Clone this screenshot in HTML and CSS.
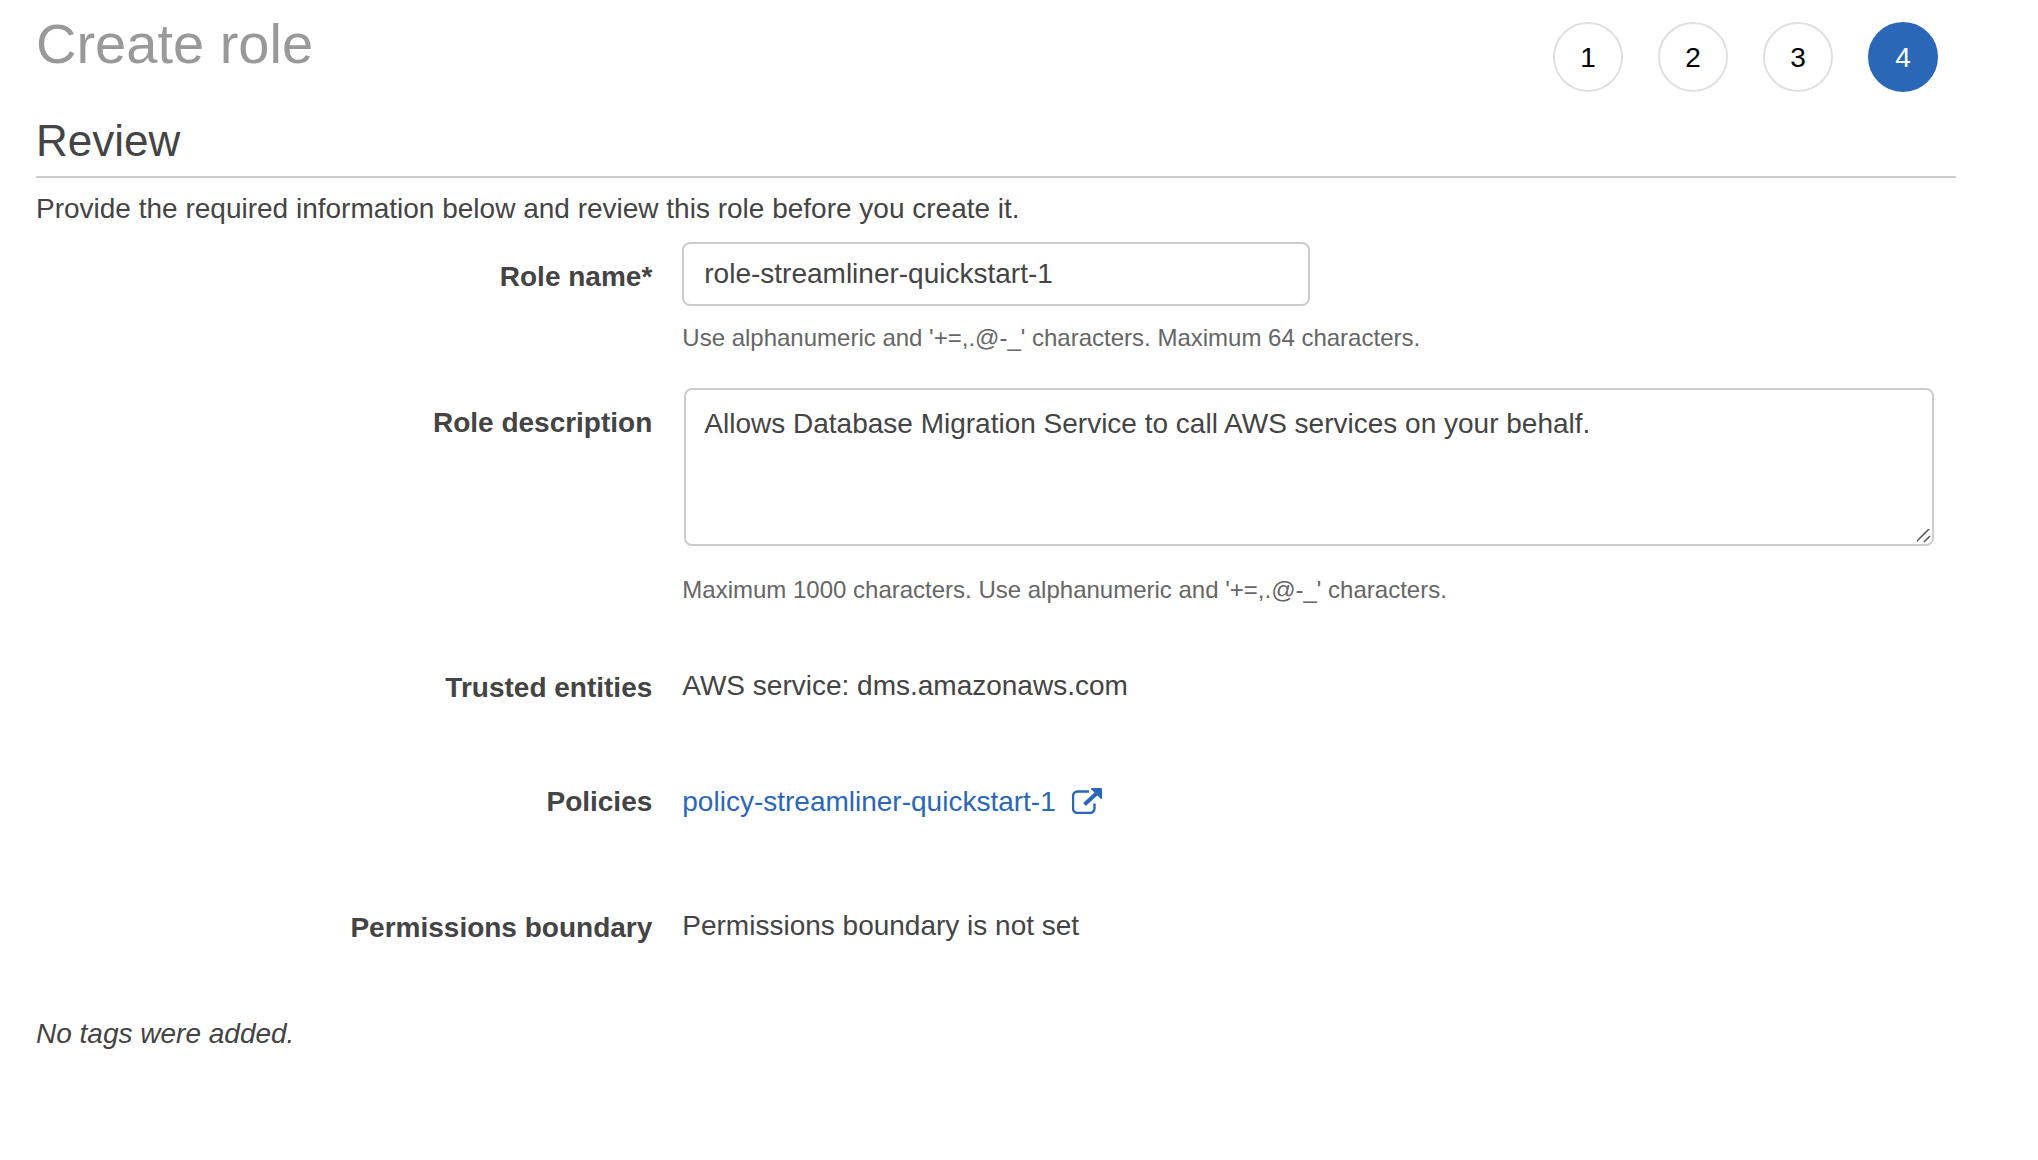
FILE: index.html
```html
<!DOCTYPE html>
<html lang="en">
<head>
<meta charset="utf-8">
<title>Create role</title>
<link rel="stylesheet" href="styles.css">
</head>
<body>
<main class="page">
  <header class="page-header">
    <h1 class="page-title">Create role</h1>
    <nav aria-label="Steps">
      <ol class="steps">
        <li><button type="button" class="step">1</button></li>
        <li><button type="button" class="step">2</button></li>
        <li><button type="button" class="step">3</button></li>
        <li><button type="button" class="step step-current" aria-current="step">4</button></li>
      </ol>
    </nav>
  </header>

  <h2 class="section-title">Review</h2>
  <p class="intro">Provide the required information below and review this role before you create it.</p>

  <form class="role-form">
    <div class="row">
      <label class="row-label" for="role-name">Role name*</label>
      <div class="row-content">
        <input class="control name-input" id="role-name" type="text" value="role-streamliner-quickstart-1" aria-describedby="name-hint">
        <p class="hint" id="name-hint">Use alphanumeric and '+=,.@-_' characters. Maximum 64 characters.</p>
      </div>
    </div>
    <div class="row">
      <label class="row-label" for="role-description">Role description</label>
      <div class="row-content">
        <textarea class="control description-input" id="role-description" aria-describedby="description-hint">Allows Database Migration Service to call AWS services on your behalf.</textarea>
        <p class="hint description-hint" id="description-hint">Maximum 1000 characters. Use alphanumeric and '+=,.@-_' characters.</p>
      </div>
    </div>
  </form>

  <dl class="summary">
    <div class="row">
      <dt class="row-label">Trusted entities</dt>
      <dd class="row-content">AWS service: dms.amazonaws.com</dd>
    </div>
    <div class="row policies">
      <dt class="row-label">Policies</dt>
      <dd class="row-content">
        <a class="policy-link" href="#policy">policy-streamliner-quickstart-1
          <svg class="external-icon" viewBox="0 0 30 26" aria-hidden="true">
            <path d="M17 3.500H5.500a4.500 4.500 0 0 0-4.500 4.500v12.500a4.500 4.500 0 0 0 4.500 4.500h12.500a4.500 4.500 0 0 0 4.500-4.500V15.500" fill="none" stroke="currentColor" stroke-width="2.400"/>
            <path d="M12.500 16.500L25 5" fill="none" stroke="currentColor" stroke-width="4"/>
            <path d="M19.500 0H29a1 1 0 0 1 1 1v9.500q-.4 1-1.300.3l-9.500-9.500Q18.700.3 19.500 0z" fill="currentColor"/>
          </svg>
        </a>
      </dd>
    </div>
    <div class="row">
      <dt class="row-label">Permissions boundary</dt>
      <dd class="row-content">Permissions boundary is not set</dd>
    </div>
  </dl>

  <p class="no-tags">No tags were added.</p>
</main>
</body>
</html>
```

FILE: styles.css
```css
* {
  box-sizing: border-box;
}

body {
  margin: 0;
  background: #fff;
  color: #444;
  font: 28px/40px "Helvetica Neue", "Liberation Sans", Arial, sans-serif;
}

h1, h2, p, ol, dl, dd {
  margin: 0;
  padding: 0;
  font-weight: normal;
}

.page {
  padding: 12px 82px 40px 36px;
}

.page-header {
  display: flex;
  justify-content: space-between;
  align-items: flex-start;
}

.page-title {
  color: #999;
  font-size: 56px;
  line-height: 64px;
}

.steps {
  display: flex;
  gap: 35px;
  padding: 10px 18px 0 0;
  list-style: none;
}

.step {
  display: block;
  width: 70px;
  height: 70px;
  padding: 2px 0 0;
  border: 2px solid #e0e0e0;
  border-radius: 50%;
  background: #fff;
  color: #000;
  font: inherit;
}

.step-current {
  border-color: #2b67b7;
  background: #2b67b7;
  color: #fff;
}

.section-title {
  margin-top: 21px;
  padding-bottom: 7px;
  border-bottom: 2px solid #ccc;
  font-size: 44px;
  line-height: 56px;
}

.intro {
  margin-top: 11px;
}

.role-form {
  display: grid;
  gap: 34px;
  margin-top: 13px;
}

.row {
  display: grid;
  grid-template-columns: 30fr 62fr;
  column-gap: 30px;
}

.row-label {
  font-weight: bold;
  text-align: right;
}

.role-form .row-label {
  padding-top: 15px;
}

.control {
  display: block;
  border: 2px solid #ccc;
  border-radius: 8px;
  background: #fff;
  color: inherit;
  font: inherit;
}

.name-input {
  width: 628px;
  max-width: 100%;
  height: 64px;
  padding: 0 20px;
}

.description-input {
  width: calc(100% - 24px);
  height: 158px;
  margin-left: 2px;
  padding: 14px 18px;
  resize: vertical;
}

.description-input::-webkit-resizer {
  background: url("data:image/svg+xml,%3Csvg xmlns='http://www.w3.org/2000/svg' viewBox='0 0 16 16'%3E%3Cpath d='M0 14L14 0M8 14l6-6' stroke='%23555' stroke-width='1.500'/%3E%3C/svg%3E") right bottom / 16px 16px no-repeat;
}

.hint {
  margin-top: 16px;
  color: #666;
  font-size: 24px;
  line-height: 32px;
}

.description-hint {
  margin-top: 28px;
}

.summary {
  margin-top: 60px;
}

.summary .row-label {
  padding-top: 2px;
}

.summary .policies {
  margin: 72px 0 84px;
}

.policies .row-content {
  padding-top: 2px;
}

.policy-link {
  color: #2b67b7;
  text-decoration: none;
}

.external-icon {
  width: 30px;
  height: 26px;
  margin-left: 8px;
  vertical-align: -3px;
}

.no-tags {
  margin-top: 66px;
  font-style: italic;
}
```
